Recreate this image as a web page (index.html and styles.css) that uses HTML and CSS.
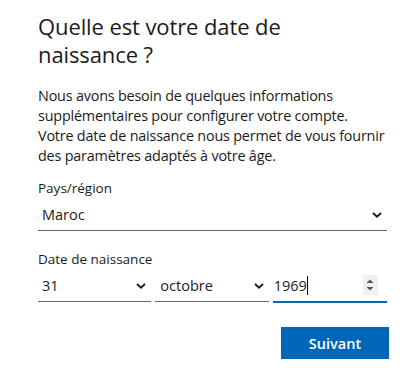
FILE: index.html
```html
<!DOCTYPE html>
<html lang="fr">
<head>
    <meta charset="UTF-8">
    <meta name="viewport" content="width=device-width, initial-scale=1.0">
    <title>Date de naissance</title>
    <link rel="stylesheet" href="styles.css">
</head>
<body>
    <main class="signup">
        <h1 class="title">Quelle est votre date de naissance ?</h1>
        <p class="intro">Nous avons besoin de quelques informations supplémentaires pour configurer votre compte.<br>Votre date de naissance nous permet de vous fournir des paramètres adaptés à votre âge.</p>

        <div class="field">
            <label class="field-label" for="country">Pays/région</label>
            <div class="select-wrap">
                <select class="select" id="country">
                    <option>Maroc</option>
                </select>
                <svg class="chevron" width="10" height="6" viewBox="0 0 10 6"><path d="M1 1 L5 4.6 L9 1" fill="none" stroke="#1b1b1b" stroke-width="1.9"/></svg>
            </div>
        </div>

        <div class="field field-date">
            <label class="field-label" for="day">Date de naissance</label>
            <div class="date-row">
                <div class="select-wrap">
                    <select class="select" id="day">
                        <option>31</option>
                    </select>
                    <svg class="chevron" width="10" height="6" viewBox="0 0 10 6"><path d="M1 1 L5 4.6 L9 1" fill="none" stroke="#1b1b1b" stroke-width="1.9"/></svg>
                </div>
                <div class="select-wrap">
                    <select class="select select-month" id="month">
                        <option>octobre</option>
                    </select>
                    <svg class="chevron" width="10" height="6" viewBox="0 0 10 6"><path d="M1 1 L5 4.6 L9 1" fill="none" stroke="#1b1b1b" stroke-width="1.9"/></svg>
                </div>
                <div class="year">
                    <span class="year-value">1969</span><span class="caret"></span>
                    <span class="spinner">
                        <svg width="8" height="14" viewBox="0 0 8 14"><path d="M0.5 5 L4 1.5 L7.5 5 Z" fill="#555"/><path d="M0.5 9 L4 12.5 L7.5 9 Z" fill="#555"/></svg>
                    </span>
                </div>
            </div>
        </div>

        <div class="actions">
            <button class="btn-primary">Suivant</button>
        </div>
    </main>
</body>
</html>
```

FILE: styles.css
```css
body {
    margin: 0;
    background-color: #fff;
    color: #1b1b1b;
    font-family: "Open Sans", "Noto Sans", sans-serif;
}
.signup {
    width: 349px;
    padding: 12px 0 0 38px;
}
.title {
    max-width: 300px;
    margin: 0;
    font-size: 22px;
    line-height: 28px;
    font-weight: 500;
    letter-spacing: -0.1px;
}
.intro {
    width: 352px;
    margin: 18px 0 0;
    font-size: 14.4px;
    line-height: 20px;
    letter-spacing: -0.2px;
}
.field {
    margin-top: 12px;
}
.field-date {
    margin-top: 18px;
}
.field-label {
    display: block;
    font-size: 13.5px;
    line-height: 20px;
}
.select-wrap {
    position: relative;
    flex: 1;
}
.select {
    appearance: none;
    -webkit-appearance: none;
    width: 100%;
    height: 33px;
    margin: 0;
    padding: 0 24px 0 4px;
    border: none;
    border-bottom: 1px solid #666;
    border-radius: 0;
    background: transparent;
    color: #1b1b1b;
    font-family: inherit;
    font-size: 14.5px;
}
.select-month {
    padding-left: 5px;
}
.chevron {
    position: absolute;
    right: 5px;
    top: 14px;
    pointer-events: none;
}
.date-row {
    display: flex;
    gap: 4px;
}
.year {
    flex: 1;
    display: flex;
    align-items: center;
    height: 32px;
    padding-left: 1px;
    border-bottom: 2px solid #0067b8;
    font-size: 14.5px;
}
.caret {
    width: 1px;
    height: 19px;
    background: #000;
}
.spinner {
    display: flex;
    align-items: center;
    justify-content: center;
    width: 15px;
    height: 20px;
    margin-left: auto;
    margin-right: 9px;
    background: #f0f0f0;
}
.actions {
    display: flex;
    justify-content: flex-end;
    margin-top: 24px;
    margin-right: -2px;
}
.btn-primary {
    width: 108px;
    height: 32px;
    border: none;
    background-color: #0067b8;
    color: #fff;
    font-family: inherit;
    font-size: 14.5px;
    font-weight: 600;
    cursor: pointer;
}
```
